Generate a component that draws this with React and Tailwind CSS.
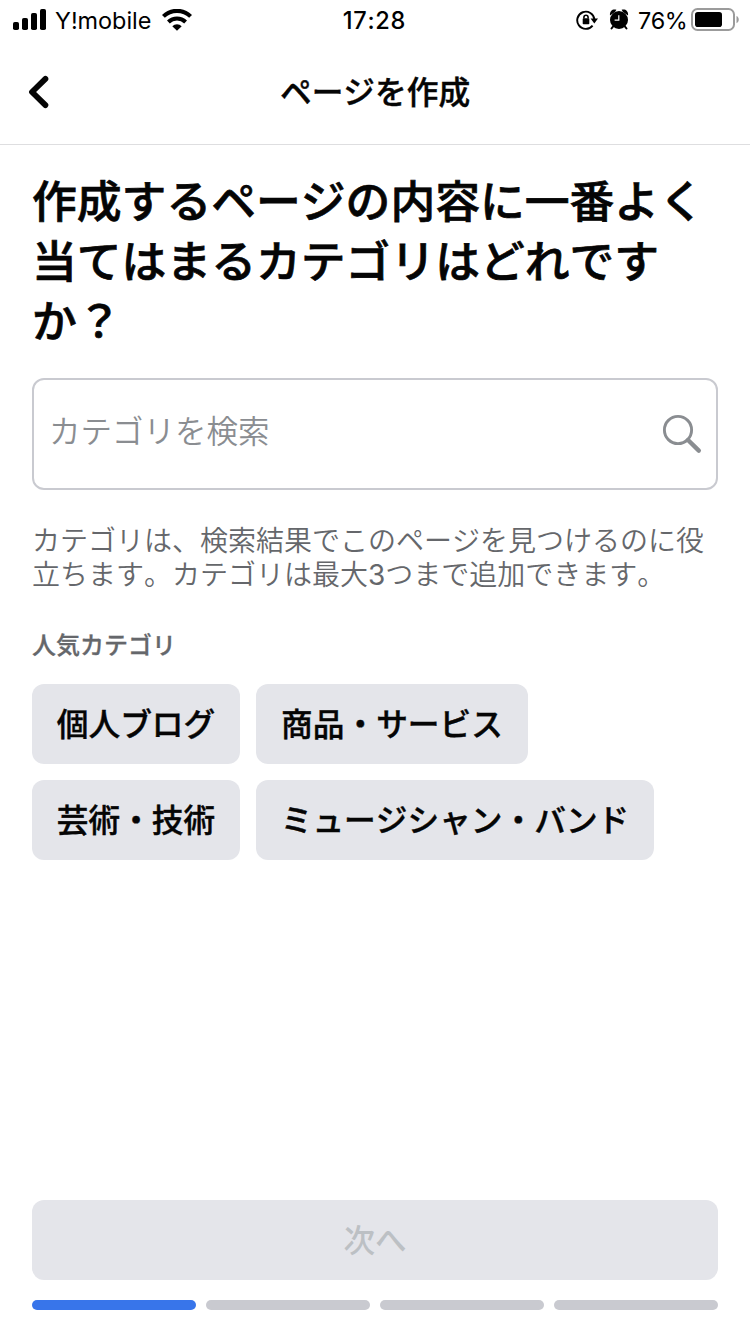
import React from 'react';

const categoryRows = [
  [
    { label: '個人ブログ', width: 'w-[208px]' },
    { label: '商品・サービス', width: 'w-[272px]' },
  ],
  [
    { label: '芸術・技術', width: 'w-[208px]' },
    { label: 'ミュージシャン・バンド', width: 'w-[398px]' },
  ],
];

const steps = [true, false, false, false];

const SignalIcon = () => (
  <svg width="34" height="22" viewBox="0 0 34 22" fill="#000">
    <rect x="0" y="13" width="6" height="8" rx="1.8" />
    <rect x="9" y="9" width="6" height="12" rx="1.8" />
    <rect x="18" y="4" width="6" height="17" rx="1.8" />
    <rect x="27" y="0" width="6" height="21" rx="1.8" />
  </svg>
);

const WifiIcon = () => (
  <svg width="30" height="22" viewBox="0 0 30 22" fill="none" stroke="#000">
    <path d="M1.4 7.4a19.4 19.4 0 0 1 27.2 0" strokeWidth="4.1" />
    <path d="M6.4 13a12.3 12.3 0 0 1 17.2 0" strokeWidth="4" />
    <path d="M15 21.8l-4.7-4.6a6.7 6.7 0 0 1 9.4 0z" fill="#000" stroke="none" />
  </svg>
);

const RotationLockIcon = () => (
  <svg width="22" height="20" viewBox="0 0 22 20" fill="none" stroke="#000">
    <path d="M16.6 15.6A8.6 8.6 0 1 1 18.4 9.4" strokeWidth="1.9" />
    <path d="M14.6 8.6h7.4l-3.7 4.8z" fill="#000" stroke="none" />
    <path d="M7.9 8.6V7.4a2.1 2.1 0 0 1 4.2 0v1.2" strokeWidth="1.6" />
    <rect x="6.7" y="8.2" width="6.6" height="6" rx="0.8" fill="#000" stroke="none" />
  </svg>
);

const AlarmIcon = () => (
  <svg width="20" height="22" viewBox="0 0 20 22" fill="#000">
    <circle cx="10" cy="11" r="9" />
    <path d="M1 6.4C0.4 2.4 3.4-0.6 7.4 0.8L6 3z" />
    <path d="M19 6.4C19.6 2.4 16.6-0.6 12.6 0.8L14 3z" />
    <path d="M3.8 17.8l-1.3 1.7M16.2 17.8l1.3 1.7" stroke="#000" strokeWidth="2" strokeLinecap="round" />
    <path d="M9.8 6.2v4.9H5.6" fill="none" stroke="#fff" strokeWidth="1.2" />
  </svg>
);

const BatteryIcon = () => (
  <svg width="49" height="24" viewBox="0 0 49 24">
    <rect x="1" y="1" width="42" height="21" rx="5.5" fill="none" stroke="#9b9b9b" strokeWidth="2" />
    <rect x="4" y="4" width="27" height="15" rx="2.8" fill="#000" />
    <path d="M45.5 8c3 1.2 3 6 0 7.2z" fill="#9b9b9b" />
  </svg>
);

const StatusBar = () => (
  <div className="h-10 flex items-center justify-between pl-[13px] pr-[10px] text-black font-['Inter',sans-serif]">
    <div className="w-[290px] flex items-center">
      <SignalIcon />
      <span className="ml-2 w-[98px] pt-0.5 text-[23.4px] leading-10 whitespace-nowrap">Y!mobile</span>
      <span className="ml-[9px]"><WifiIcon /></span>
    </div>
    <span className="pt-0.5 pr-1 text-[23.6px] leading-10 font-[550] tracking-[0.7px]">17:28</span>
    <div className="w-[290px] flex items-center justify-end">
      <RotationLockIcon />
      <span className="ml-[11px] mr-[9px]"><AlarmIcon /></span>
      <span className="w-[53px] pt-0.5 text-[23.4px] leading-10 tracking-[-0.5px] whitespace-nowrap">76%</span>
      <BatteryIcon />
    </div>
  </div>
);

const Header = () => (
  <header className="h-[105px] flex items-center border-b border-[#dedee0]">
    <div className="w-[100px] pl-7">
      <svg width="22" height="34" viewBox="0 0 22 34" fill="none" stroke="#050505" strokeWidth="5.8" strokeLinecap="round" strokeLinejoin="round">
        <path d="M17.4 3.9L4 17l13.4 13.1" />
      </svg>
    </div>
    <h1 className="flex-1 pb-1 text-center text-[31.7px] leading-10 font-medium [-webkit-text-stroke:0.4px]">ページを作成</h1>
    <div className="w-[100px]" />
  </header>
);

const App = () => {
  return (
    <div className="w-[750px] h-[1334px] flex flex-col bg-white text-[#050505] font-['Noto_Sans_CJK_JP',sans-serif] [font-kerning:none]">
      <StatusBar />
      <Header />

      <main className="flex-1 flex flex-col px-8">
        {/* Question */}
        <h2 className="mt-6 text-[44.8px] leading-[60px] font-medium [-webkit-text-stroke:0.7px] whitespace-nowrap">
          作成するページの内容に一番よく<br />
          当てはまるカテゴリはどれです<br />
          か？
        </h2>

        {/* Search */}
        <div className="mt-[29px] h-28 flex items-center justify-between rounded-xl border-2 border-[#c9cad0] pl-[15px] pr-3.5">
          <span className="pb-2.5 text-[31.5px] leading-10 font-[350] text-[#8a8d91]">カテゴリを検索</span>
          <svg width="40" height="40" viewBox="0 0 40 40" fill="none" stroke="#8a8d91">
            <circle cx="16" cy="16" r="13.6" strokeWidth="2.9" />
            <path d="M26 26l10.8 10.6" strokeWidth="4.4" strokeLinecap="round" />
          </svg>
        </div>

        <p className="mt-8 text-[28px] leading-[34px] font-[350] text-[#65676b] whitespace-nowrap">
          カテゴリは、検索結果でこのページを見つけるのに役<br />
          立ちます。カテゴリは最大<span className="font-['Inter',sans-serif] leading-none font-normal">3</span>つまで追加できます。
        </p>

        {/* Popular categories */}
        <h3 className="mt-[38px] text-[24px] leading-8 font-medium [-webkit-text-stroke:0.3px] text-[#65676b]">人気カテゴリ</h3>
        <div className="mt-6 flex flex-col gap-4">
          {categoryRows.map((row, i) => (
            <div key={i} className="flex gap-4">
              {row.map((category) => (
                <button
                  key={category.label}
                  className={`${category.width} h-20 pb-1 rounded-xl bg-[#e4e5ea] text-[31.7px] leading-10 font-medium [-webkit-text-stroke:0.4px] whitespace-nowrap`}
                >
                  {category.label}
                </button>
              ))}
            </div>
          ))}
        </div>

        {/* Footer */}
        <button className="mt-auto h-20 pb-1 shrink-0 rounded-xl bg-[#e4e5ea] text-[31.6px] leading-10 font-medium text-[#bcc0c4]">
          次へ
        </button>
        <div className="mt-5 mb-6 flex gap-2.5">
          {steps.map((active, i) => (
            <div key={i} className={`h-2.5 flex-1 rounded-full ${active ? 'bg-[#3875ea]' : 'bg-[#c9cad0]'}`} />
          ))}
        </div>
      </main>
    </div>
  );
};

export default App;
